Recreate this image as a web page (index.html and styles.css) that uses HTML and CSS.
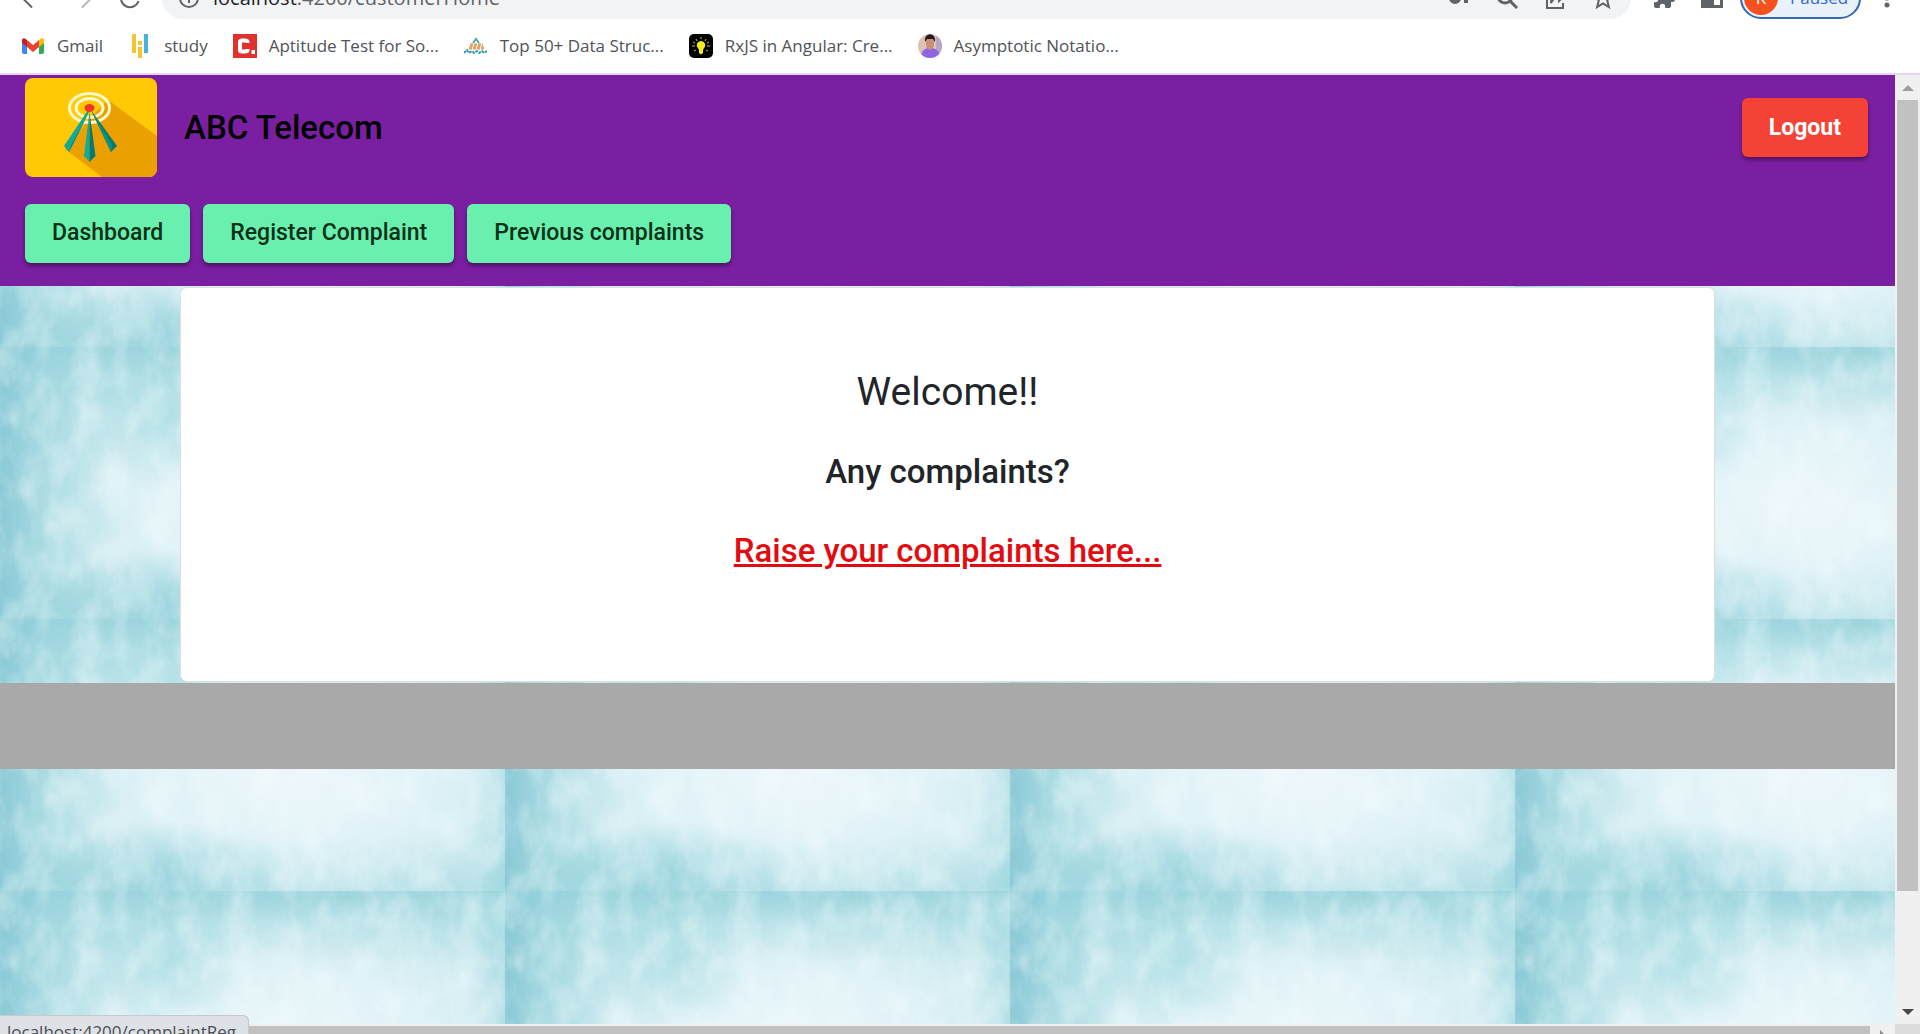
FILE: index.html
```html
<!DOCTYPE html>
<html lang="en">
<head>
<meta charset="utf-8">
<title>ABC Telecom</title>
<link rel="stylesheet" href="styles.css">
</head>
<body>
<div class="toolbar">
  <div class="toolbar-row">
    <div class="nav-icons">
      <svg width="28" height="28" viewBox="0 0 28 28" fill="none" stroke="#5f6368" stroke-width="2"><path d="M24 14H5M14 4.500 4.500 14 14 23.500"/></svg>
      <svg width="28" height="28" viewBox="0 0 28 28" fill="none" stroke="#b5b8bb" stroke-width="2"><path d="M4 14h19M14 4.500 23.500 14 14 23.500"/></svg>
      <svg width="28" height="28" viewBox="0 0 28 28" fill="none" stroke="#5f6368" stroke-width="2"><path d="M20.500 17A9 9 0 1 1 18 7.500L21 10M21 4v7h-7"/></svg>
    </div>
    <div class="omnibox">
      <svg width="22" height="22" viewBox="0 0 22 22" fill="none" stroke="#5f6368" stroke-width="2"><circle cx="11" cy="11" r="9"/><path d="M11 10v6M11 6v2"/></svg>
      <span class="url">localhost<span class="url-path">:4200/customerHome</span></span>
      <div class="omni-icons">
        <svg width="24" height="24" viewBox="0 0 24 24" fill="none" stroke="#5f6368" stroke-width="4"><circle cx="8" cy="12" r="4"/><path d="M12 12h10M19 12v5"/></svg>
        <svg width="24" height="24" viewBox="0 0 24 24" fill="none" stroke="#5f6368" stroke-width="3"><circle cx="10" cy="10" r="7"/><path d="m15 15 7 7"/></svg>
        <svg width="24" height="24" viewBox="0 0 24 24" fill="none" stroke="#5f6368" stroke-width="2"><path d="M9 4H4v18h16v-5M8 17c0-6 3-9 8-9V4l5 6-5 5v-4c-4 0-6 2-8 6z"/></svg>
        <svg width="24" height="24" viewBox="0 0 24 24" fill="none" stroke="#5f6368" stroke-width="2"><path d="m12 3 2.600 6.400 6.900.5-5.300 4.400 1.700 6.700L12 17.400 6.100 21l1.700-6.700L2.500 9.900l6.900-.5z"/></svg>
      </div>
    </div>
    <div class="tool-icons">
      <svg width="24" height="24" viewBox="0 0 24 24" fill="#5f6368"><path d="M20.500 11H19V7a2 2 0 0 0-2-2h-4V3.500a2.500 2.500 0 0 0-5 0V5H4a2 2 0 0 0-2 2v3.800h1.500a2.700 2.700 0 0 1 0 5.400H2V20a2 2 0 0 0 2 2h3.800v-1.500a2.700 2.700 0 0 1 5.400 0V22H17a2 2 0 0 0 2-2v-4h1.500a2.500 2.500 0 0 0 0-5z"/></svg>
      <svg width="24" height="24" viewBox="0 0 24 24"><path fill="#5f6368" fill-rule="evenodd" d="M1 3h22v19H1zM14 6v13h6V6z"/></svg>
    </div>
    <button class="profile"><span class="avatar">K</span>Paused</button>
    <svg class="dots" width="6" height="22" viewBox="0 0 6 22" fill="#5f6368"><circle cx="3" cy="4" r="2.500"/><circle cx="3" cy="11" r="2.500"/><circle cx="3" cy="18" r="2.500"/></svg>
  </div>
</div>

<nav class="bookmarks">
  <a href="#"><svg width="24" height="24" viewBox="0 0 24 24"><path fill="#4285f4" d="M1 6v12a2 2 0 0 0 2 2h3V9z"/><path fill="#34a853" d="M23 6v12a2 2 0 0 1-2 2h-3V9z"/><path fill="#fbbc04" d="m18 6 2-1.500q3-1 3 2V9l-5 4z"/><path fill="#c5221f" d="M1 9V6.500q0-3 3-2L6 6v7z"/><path fill="#ea4335" d="m6 6 6 5 6-5v7l-6 5-6-5z"/></svg>Gmail</a>
  <a href="#"><svg width="24" height="24" viewBox="0 0 24 24"><path fill="#f7c42d" d="M4 0h4v19H4zM10 13h4v11h-4zM10 7h4v4h-4z"/><path fill="#4bb0e0" d="M16 0h4v19h-4z"/></svg>study</a>
  <a href="#"><svg width="24" height="24" viewBox="0 0 24 24"><path fill="#e0312d" d="M0 0h24v24H0z"/><path d="M14.500 9V8q0-1.500-2.500-1.500H9Q7 6.500 7 8v8q0 1.500 2 1.500h3q2.500 0 2.500-1.500v-1" fill="none" stroke="#fff" stroke-width="4"/><path fill="#fff" d="M18.500 16h3.500v4h-3.500z"/></svg>Aptitude Test for So...</a>
  <a href="#"><svg width="24" height="24" viewBox="0 0 24 24" fill="none" stroke-width="2"><path stroke="#55a7ad" d="m9 9 3-4 3 4"/><path stroke="#dfa45d" stroke-width="3" stroke-dasharray="3 1" d="M6 11h13M5 14h15"/><path stroke="#369eac" stroke-dasharray="3 1" d="m0 19 3-3 2 3 3-2 2 2 3-2 2 2 3-2 2 2 3-2"/></svg>Top 50+ Data Struc...</a>
  <a href="#"><svg width="24" height="24" viewBox="0 0 24 24"><rect width="24" height="24" rx="5"/><path fill="#f4ec25" d="M12 7a4.200 4.200 0 0 0-3 7.200q1 1 1 2.300V19l2 1.500 2-1.500v-2.500q0-1.300 1-2.300A4.200 4.200 0 0 0 12 7z"/><path stroke="#c8c127" d="M12 3v2M7 5l1 2M17 5l-1 2M4 8l2 1M20 8l-2 1M3 12h3M21 12h-3M5 17l2-1M19 17l-2-1"/></svg>RxJS in Angular: Cre...</a>
  <a href="#"><svg width="24" height="24" viewBox="0 0 24 24"><clipPath id="round"><circle cx="12" cy="12" r="12"/></clipPath><g clip-path="url(#round)"><path fill="#dfc2b1" d="M0 0h24v24H0z"/><path fill="#b7a6c8" d="M18 0h6v24h-6z"/><path fill="#8f65e4" d="M3 24q0-9 7-10h4q8 1 8 10z"/><path fill="#c98f78" d="M8 4h8v6q0 5-4 6-4-1-4-6z"/><path fill="#241c20" d="M7 8Q6 1 12 0q6 1 5 8l-2-3H9z"/></g></svg>Asymptotic Notatio...</a>
</nav>

<div class="window">
  <div class="page">
    <header class="header">
      <div class="header-row">
        <svg class="logo" width="132" height="99" viewBox="0 0 132 99">
          <path fill="#ffc906" d="M0 0h132v99H0z"/>
          <path fill="#eaa000" d="M83 22 132 58v41H77L40 71 65 40z"/>
          <g fill="none" stroke="#fff8c8" stroke-width="3"><ellipse cx="64.500" cy="30" rx="20" ry="14.500"/><ellipse cx="64.500" cy="30" rx="13.500" ry="9.500"/></g>
          <path fill="#12aa98" d="m63 32-24 36 5 6 20-40z"/><path fill="#08796c" d="m64 34-20 40 2-6z"/>
          <path fill="#08796c" d="m66 32 26 36-6 6z"/><path fill="#0c9384" d="m66 32 20 42 1-7z"/>
          <path fill="#12aa98" d="M64.500 34 59 78l5.500 6z"/><path fill="#08796c" d="m64.500 34 6 44-6 6z"/>
          <ellipse cx="64.500" cy="30" rx="5" ry="4" fill="#f03428"/>
        </svg>
        <h1 class="brand">ABC Telecom</h1>
        <button class="btn btn-logout">Logout</button>
      </div>
      <div class="header-row">
        <button class="btn">Dashboard</button>
        <button class="btn">Register Complaint</button>
        <button class="btn">Previous complaints</button>
      </div>
    </header>
    <main class="card">
      <h2 class="welcome">Welcome!!</h2>
      <p class="line">Any complaints?</p>
      <p class="line"><a class="raise" href="#">Raise your complaints here...</a></p>
    </main>
    <footer class="footer"></footer>
  </div>
  <div class="vbar">
    <span class="arrow arrow-up"></span>
    <div class="vtrack"><div class="vthumb"></div></div>
    <span class="arrow arrow-down"></span>
  </div>
  <div class="hbar">
    <div class="hthumb"></div>
    <span class="arrow arrow-right"></span>
  </div>
  <div class="corner"></div>
</div>
<div class="status">localhost:4200/complaintReg</div>
</body>
</html>
```
FILE: styles.css
```css
* { box-sizing: border-box; }

body {
  margin: 0;
  height: 100vh;
  overflow: hidden;
  display: flex;
  flex-direction: column;
  background: #fff;
  font-family: "Open Sans", sans-serif;
}

h1, h2, p { margin: 0; }
svg { display: block; flex: none; }

/* Browser toolbar, scrolled half out of view */
.toolbar {
  height: 19px;
  flex: none;
  overflow: hidden;
  display: flex;
  align-items: flex-end;
}
.toolbar-row {
  flex: 1;
  height: 42px;
  display: flex;
  align-items: center;
  padding: 0 30px 0 18px;
}
.nav-icons { display: flex; gap: 22px; margin-right: 16px; }
.omnibox {
  flex: 1;
  height: 42px;
  border-radius: 21px;
  background: #f1f3f4;
  display: flex;
  align-items: center;
  gap: 13px;
  padding: 0 16px;
}
.url { flex: 1; font-size: 20px; line-height: 26px; color: #202124; }
.url-path { color: #5f6368; }
.omni-icons { display: flex; gap: 24px; }
.tool-icons { display: flex; gap: 24px; margin: 0 16px 0 21px; }
.profile {
  width: 121px;
  height: 42px;
  display: flex;
  align-items: center;
  gap: 12px;
  padding: 0 2px;
  border: 2px solid #3468b4;
  border-radius: 21px;
  background: #e9f1fb;
  color: #3367d6;
  font: 17px/24px "Open Sans", sans-serif;
}
.avatar {
  width: 34px;
  height: 34px;
  border-radius: 50%;
  background: #f4511e;
  color: #fff;
  line-height: 34px;
  text-align: center;
}
.dots { margin-left: 23px; }

.bookmarks {
  height: 56px;
  flex: none;
  display: flex;
  align-items: center;
  gap: 25px;
  padding: 0 21px;
  border-bottom: 2px solid #e8d3f3;
}
.bookmarks a {
  display: flex;
  align-items: center;
  gap: 12px;
  color: #505357;
  text-decoration: none;
  font-size: 17px;
  line-height: 24px;
  white-space: nowrap;
}

.window {
  flex: 1;
  min-height: 0;
  display: grid;
  grid-template-columns: minmax(0, 1fr) 25px;
  grid-template-rows: minmax(0, 1fr) 10px;
}

/* Repeating watercolour wash */
.page {
  overflow: hidden;
  font-family: Roboto, sans-serif;
  background-color: #bfe4ea;
  background-size: 505px 272px;
  background-image:
    url("data:image/svg+xml,%3Csvg xmlns='http://www.w3.org/2000/svg' width='505' height='272'%3E%3Cfilter id='f' x='0' y='0' width='1' height='1'%3E%3CfeTurbulence type='fractalNoise' baseFrequency='.04 .025' numOctaves='4' seed='4' stitchTiles='stitch'/%3E%3CfeColorMatrix values='0 0 0 0 .92 0 0 0 0 .98 0 0 0 0 .99 .9 0 0 0 -.32'/%3E%3C/filter%3E%3Crect width='505' height='272' filter='url(%23f)'/%3E%3C/svg%3E"),
    linear-gradient(90deg, rgba(135, 200, 213, .95), rgba(145, 208, 218, .5) 9%, transparent 24%, transparent 94%, rgba(150, 212, 221, .55)),
    linear-gradient(180deg, rgba(140, 205, 216, .7), rgba(150, 212, 221, .3) 12%, transparent 26%, transparent 80%, rgba(150, 210, 220, .35)),
    radial-gradient(ellipse 130px 60px at 165px 262px, rgba(135, 203, 216, .75), transparent),
    radial-gradient(ellipse 80px 75px at 165px 70px, rgba(155, 215, 222, .6), transparent),
    radial-gradient(ellipse 290px 160px at 290px 160px, #eef7fb, rgba(230, 245, 249, .8) 50%, transparent);
}

.header { background: #7b1fa2; color: #000; }
.header-row {
  display: flex;
  align-items: center;
  gap: 13px;
  height: 105px;
  padding: 0 27px 0 25px;
}
.header-row + .header-row { height: 106px; }
.logo { border-radius: 8px; margin-right: 14px; }
.brand { flex: 1; font-size: 33px; line-height: 40px; font-weight: 500; }
.btn {
  height: 59px;
  padding: 0 27px;
  border: 0;
  border-radius: 6px;
  background: #69f0ae;
  color: #0b3018;
  font: 500 23px/36px Roboto, sans-serif;
  box-shadow: 0 3px 4px rgba(0, 0, 0, .4);
}
.btn-logout { background: #f44336; color: #fff; font-weight: 700; }

.card {
  width: 81%;
  margin: 1px auto;
  padding: 79px 24px 90px;
  border: 1px solid #dcdfe0;
  border-radius: 7px;
  background: #fff;
  color: #212529;
  text-align: center;
}
.welcome { font-size: 39px; line-height: 50px; font-weight: 400; }
.line { margin-top: 33px; font-size: 33px; line-height: 44px; font-weight: 500; }
.line + .line { margin: 35px 0 18px; }
.raise { color: #e30b10; text-decoration: underline; }
.footer { height: 86px; background: #a9a9a9; }

.vbar { display: flex; flex-direction: column; align-items: center; background: #f0f0f0; }
.vtrack { flex: 1; align-self: stretch; padding: 0 2px; }
.vthumb { height: 88%; background: #c1c1c1; }
.arrow { flex: none; width: 25px; height: 25px; }
.arrow::before { content: ""; display: block; margin: 10px 7px; border: 6px solid transparent; }
.arrow-up::before { border-top: 0; border-bottom-color: #9e9e9e; }
.arrow-down::before { border-bottom: 0; border-top-color: #484848; }
.arrow-right::before { width: 6px; margin: 4px 10px; border-right: 0; border-left-color: #8a8a8a; }
.hbar { display: flex; overflow: hidden; padding-top: 2px; background: #f0f0f0; }
.hthumb { flex: 1; background: #c1c1c1; }
.corner { background: #dcdcdc; }

/* Link preview laid over the lower left corner */
.status {
  position: absolute;
  left: 0;
  bottom: 0;
  height: 19px;
  overflow: hidden;
  padding: 4px 12px 0 7px;
  border: solid #c6cad0;
  border-width: 1px 1px 0 0;
  border-radius: 0 6px 0 0;
  background: #dee1e6;
  color: #4b4e52;
  font-size: 17px;
  line-height: 24px;
}
```
